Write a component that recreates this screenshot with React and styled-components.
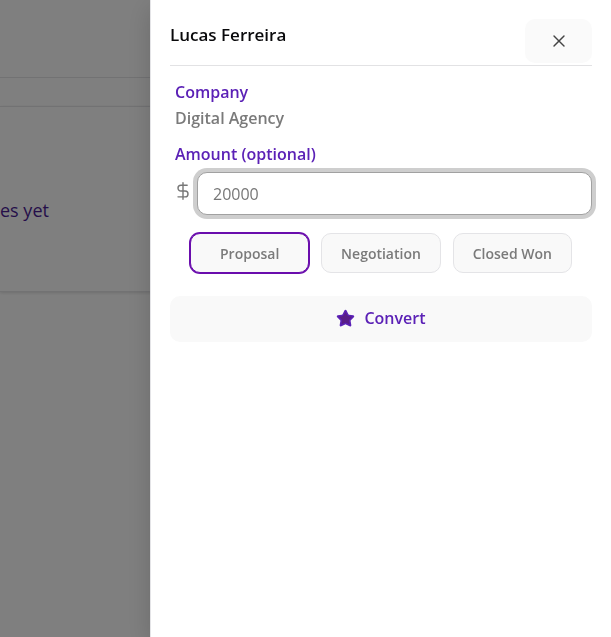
import React, { useState } from "react";
import styled, { createGlobalStyle } from "styled-components";
import { DollarSign, Star, X } from "lucide-react";

const GlobalStyle = createGlobalStyle`
  *, *::before, *::after { box-sizing: border-box; }
  body {
    margin: 0;
    background: #ffffff;
    font-family: "Segoe UI", "Open Sans", "Noto Sans", sans-serif;
  }
  button, input { font-family: inherit; }
`;

const Page = styled.main`
  min-height: 100vh;
  overflow: hidden;
`;

const TopBar = styled.div`
  height: 78px;
  border-bottom: 1px solid #e4e4e7;
`;

const Card = styled.section`
  margin-top: 28px;
  height: 186px;
  padding-top: 89px;
  border: solid #e4e4e7;
  border-width: 1px 0;
  box-shadow: 0 1px 3px rgba(0, 0, 0, 0.14);
`;

const EmptyText = styled.p`
  margin: 0;
  font-size: 18px;
  line-height: 28px;
  color: #4c1d95;
`;

const Backdrop = styled.div`
  position: fixed;
  inset: 0;
  background: rgba(0, 0, 0, 0.5);
`;

const Drawer = styled.aside`
  position: fixed;
  inset: 0 0 0 150px;
  padding: 19px;
  overflow: auto;
  background: #ffffff;
  border-left: 1px solid #e4e4e7;
  box-shadow: 0 8px 24px rgba(0, 0, 0, 0.16);
`;

const Header = styled.header`
  display: flex;
  justify-content: space-between;
  align-items: flex-start;
  padding-bottom: 2px;
  border-bottom: 1px solid #e2e2e4;
`;

const Title = styled.h2`
  margin: 2px 0 0;
  font-size: 17px;
  line-height: 28px;
  font-weight: 600;
  color: #09090b;
`;

const CloseButton = styled.button`
  display: flex;
  align-items: center;
  justify-content: center;
  width: 67px;
  height: 44px;
  padding: 0;
  border: 0;
  border-radius: 10px;
  background: #fafafa;
  color: #444444;
`;

const Details = styled.dl`
  margin: 13px 0 0;
  padding-left: 5px;
  font-size: 16px;
  line-height: 26px;
`;

const Term = styled.dt`
  font-weight: 600;
  color: #5b21b6;
`;

const Value = styled.dd`
  margin: 0;
  font-weight: 600;
  color: #7a7a7a;
`;

const FieldLabel = styled.label`
  display: block;
  margin-top: 10px;
  padding-left: 5px;
  font-size: 16px;
  line-height: 26px;
  font-weight: 600;
  color: #5b21b6;
`;

const AmountRow = styled.div`
  display: flex;
  gap: 4px;
  margin-top: 5px;
  padding-left: 3px;

  svg { flex: none; margin-top: 9px; color: #777777; }
`;

const AmountInput = styled.input`
  flex: 1;
  min-width: 0;
  height: 43px;
  padding: 0 15px;
  border: 1px solid #a1a1a1;
  border-radius: 10px;
  outline: 0;
  background: #ffffff;
  box-shadow: 0 0 0 4px #cecece;
  font-size: 16px;
  color: #777777;

  &::placeholder { color: #777777; opacity: 1; }
`;

const Stages = styled.div`
  display: flex;
  gap: 12px;
  margin-top: 18px;
  padding: 0 20px;
`;

const StageButton = styled.button`
  flex: 1 1 0;
  min-width: 0;
  height: 40px;
  padding: 0;
  border: 1px solid ${({ $active }) => ($active ? "#6a0dad" : "#e4e4e7")};
  border-radius: 10px;
  background: #f9f9f9;
  box-shadow: ${({ $active }) => ($active ? "0 0 0 1px #6a0dad" : "none")};
  font-size: 14px;
  font-weight: 600;
  color: #7a7a7a;
`;

const ConvertButton = styled.button`
  display: flex;
  align-items: center;
  justify-content: center;
  gap: 9px;
  width: 100%;
  height: 46px;
  margin-top: 23px;
  padding: 0 0 2px;
  border: 0;
  border-radius: 10px;
  background: #f9f9f9;
  font-size: 16px;
  font-weight: 600;
  color: #5b21b6;
`;

const STAGES = ["Proposal", "Negotiation", "Closed Won"];

export default function App() {
  const [stage, setStage] = useState("Proposal");
  const [amount, setAmount] = useState("");

  return (
    <>
      <GlobalStyle />
      <Page>
        <TopBar />
        <Card>
          <EmptyText>es yet</EmptyText>
        </Card>
      </Page>
      <Backdrop />
      <Drawer role="dialog" aria-labelledby="lead-name">
        <Header>
          <Title id="lead-name">Lucas Ferreira</Title>
          <CloseButton type="button" aria-label="Close">
            <X size={20} strokeWidth={1.7} />
          </CloseButton>
        </Header>
        <Details>
          <Term>Company</Term>
          <Value>Digital Agency</Value>
        </Details>
        <FieldLabel htmlFor="amount">Amount (optional)</FieldLabel>
        <AmountRow>
          <DollarSign size={20} strokeWidth={1.7} />
          <AmountInput
            id="amount"
            inputMode="decimal"
            placeholder="20000"
            value={amount}
            onChange={(event) => setAmount(event.target.value)}
          />
        </AmountRow>
        <Stages role="group" aria-label="Stage">
          {STAGES.map((name) => (
            <StageButton
              key={name}
              type="button"
              $active={name === stage}
              aria-pressed={name === stage}
              onClick={() => setStage(name)}
            >
              {name}
            </StageButton>
          ))}
        </Stages>
        <ConvertButton type="button">
          <Star size={19} fill="#581c87" />
          Convert
        </ConvertButton>
      </Drawer>
    </>
  );
}
